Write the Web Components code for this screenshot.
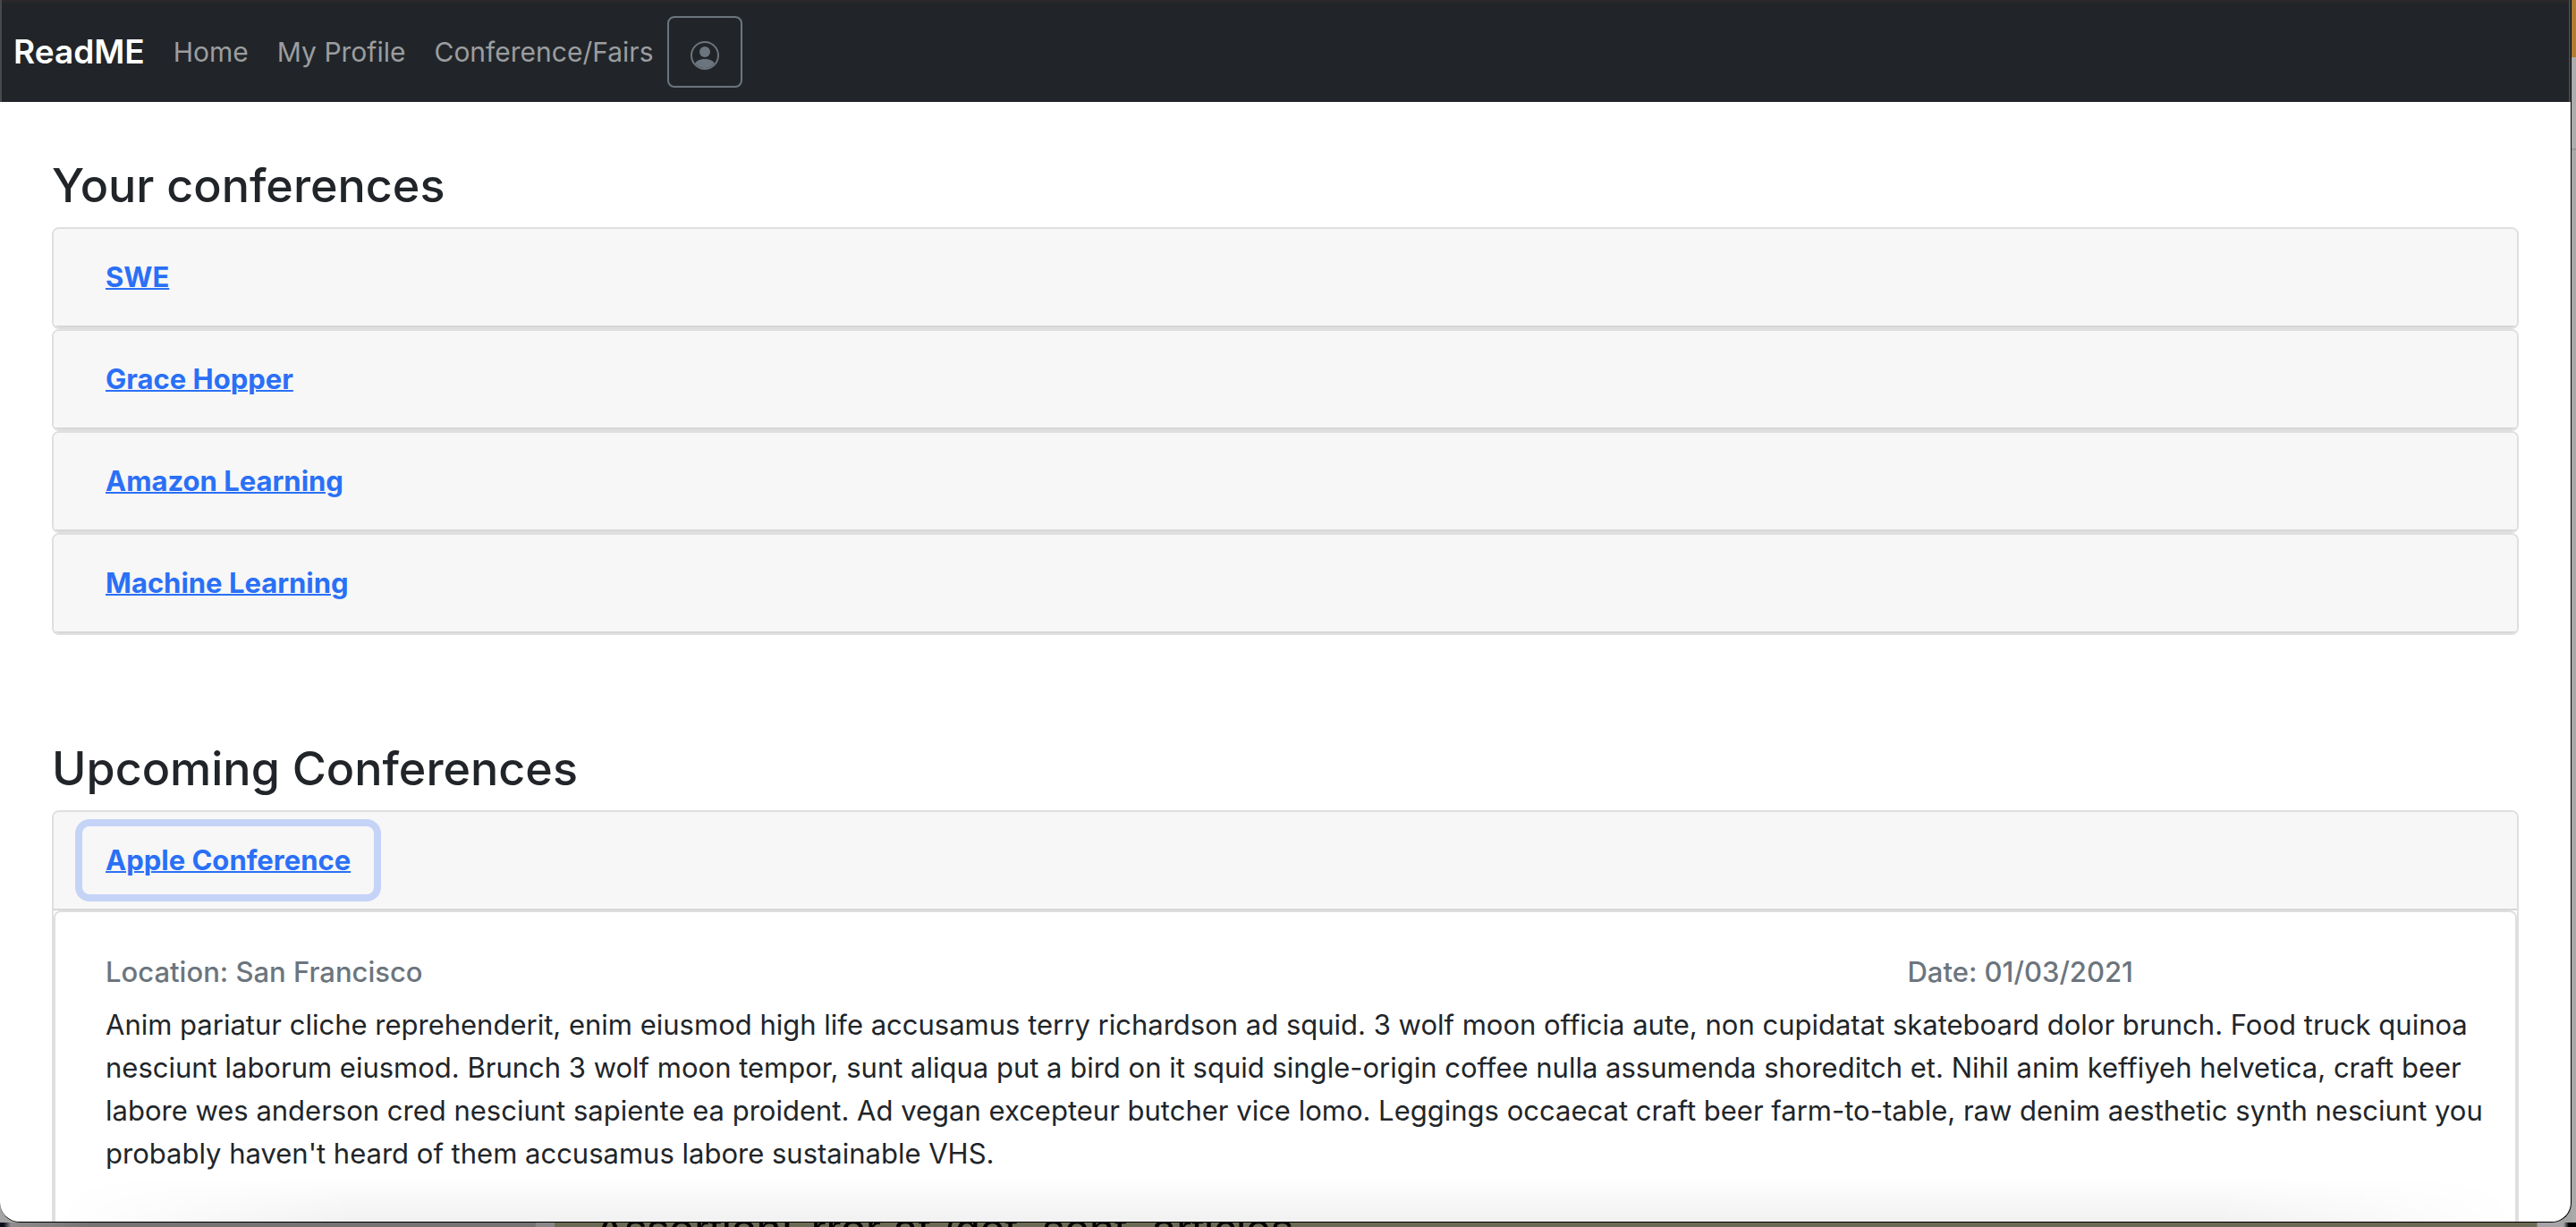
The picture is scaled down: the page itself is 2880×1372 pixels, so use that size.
<!DOCTYPE html>
<html lang="en">
<head>
<meta charset="utf-8">
<title>ReadME</title>
<style>
html, body { height: 100%; margin: 0; }
body { font-family: Inter, "Liberation Sans", sans-serif; font-size: 31px; line-height: 48px; color: #212529; overflow: hidden; }
</style>
</head>
<body>
<desk-scene>
  <app-window>
    <nav-bar slot="nav"></nav-bar>
    <conf-section heading="Your conferences">
      <conf-card name="SWE"></conf-card>
      <conf-card name="Grace Hopper"></conf-card>
      <conf-card name="Amazon Learning"></conf-card>
      <conf-card name="Machine Learning"></conf-card>
    </conf-section>
    <conf-section heading="Upcoming Conferences">
      <conf-card name="Apple Conference" active>
        <conf-detail location="San Francisco" date="01/03/2021">Anim pariatur cliche reprehenderit, enim eiusmod high life accusamus terry richardson ad squid. 3 wolf moon officia aute, non cupidatat skateboard dolor brunch. Food truck quinoa nesciunt laborum eiusmod. Brunch 3 wolf moon tempor, sunt aliqua put a bird on it squid single-origin coffee nulla assumenda shoreditch et. Nihil anim keffiyeh helvetica, craft beer labore wes anderson cred nesciunt sapiente ea proident. Ad vegan excepteur butcher vice lomo. Leggings occaecat craft beer farm-to-table, raw denim aesthetic synth nesciunt you probably haven't heard of them accusamus labore sustainable VHS.</conf-detail>
      </conf-card>
    </conf-section>
  </app-window>
</desk-scene>
<script>
const define = (name, render) => customElements.define(name, class extends HTMLElement {
  connectedCallback() {
    if (this.shadowRoot) return;
    this.attachShadow({ mode: 'open' }).innerHTML = render(this);
  }
});

define('desk-scene', () => `
<style>
:host { display: grid; grid-template-columns: minmax(0, 1fr) 5px; grid-template-rows: minmax(0, 1fr) 5px; height: 100vh; background: linear-gradient(#ababab, #a4a4a4); overflow: hidden; }
.side { background: linear-gradient(#b27e33 0 64px, #acacac 64px 166px, #969696 166px 168px, #a9a9a9 168px); }
.under { grid-column: 1 / 3; display: flex; overflow: hidden; background: linear-gradient(90deg, #0b0f1c 0 4px, #8e8c8d 12px, #767374 100px 598px, #8a8788 600px 620px, #6c6a54 620px calc(100% - 44px), #a5a2a8 calc(100% - 43px) calc(100% - 14px), #000 calc(100% - 8px)); }
.under p { margin: 0 0 0 665px; font-family: "Liberation Sans", sans-serif; font-size: 50px; line-height: 16px; color: #000; white-space: nowrap; }
</style>
<slot></slot><div class="side"></div>
<div class="under"><p>AssertionError at /get_sent_articles</p></div>`);

define('app-window', () => `
<style>
:host { display: block; position: relative; box-sizing: border-box; overflow: hidden; background: #fff; border: solid #000; border-width: 0 1px 1px 0; border-radius: 0 0 22px 22px; }
main { display: flex; flex-direction: column; gap: 112px; padding: 56px 58px; }
.shade { position: absolute; left: 0; right: 0; bottom: 0; height: 50px; background: linear-gradient(transparent, rgba(0,0,0,.055)); -webkit-mask-image: linear-gradient(90deg, transparent 60px, #000 400px calc(100% - 400px), transparent calc(100% - 60px)); mask-image: linear-gradient(90deg, transparent 60px, #000 400px calc(100% - 400px), transparent calc(100% - 60px)); }
</style>
<slot name="nav"></slot>
<main><slot></slot></main>
<div class="shade"></div>`);

define('nav-bar', () => `
<style>
:host { display: block; }
nav { display: flex; align-items: center; box-sizing: border-box; height: 114px; padding: 2px 13px 0; background: #212529; border: solid #48494b; border-width: 0 2px; box-shadow: inset 0 3px #2a2829; }
a { text-decoration: none; color: #9b9d9f; font-size: 30px; padding: 0 16px; }
.brand { color: #fff; font-size: 37px; font-weight: 600; padding: 0 16px 0 0; }
button { display: flex; align-items: center; justify-content: center; box-sizing: border-box; width: 84px; height: 80px; padding: 8px 0 0; background: none; border: 2px solid #6c757d; border-radius: 8px; color: #6c757d; }
svg { display: block; width: 32px; height: 32px; }
</style>
<nav>
<a class="brand" href="#">ReadME</a><a href="#">Home</a><a href="#">My Profile</a><a href="#">Conference/Fairs</a>
<button type="button" aria-label="Account"><svg viewBox="0 0 16 16" fill="currentColor"><path d="M13.468 12.37C12.758 11.226 11.195 10 8 10s-4.757 1.225-5.468 2.37A6.987 6.987 0 0 0 8 15a6.987 6.987 0 0 0 5.468-2.63z"/><path fill-rule="evenodd" d="M8 9a3 3 0 1 0 0-6 3 3 0 0 0 0 6z"/><path fill-rule="evenodd" d="M8 1a7 7 0 1 0 0 14A7 7 0 0 0 8 1zM0 8a8 8 0 1 1 16 0A8 8 0 0 1 0 8z"/></svg></button>
</nav>`);

define('conf-section', el => `
<style>
:host { display: block; }
h2 { margin: 0 0 16px; padding-top: 8px; font-size: 52px; line-height: 60px; font-weight: 500; }
</style>
<section><h2>${el.getAttribute('heading')}</h2><slot></slot></section>`);

define('conf-card', el => `
<style>
:host { display: block; border: 2px solid #dfdfdf; border-radius: 8px; overflow: hidden; background: #fff; }
header { display: flex; padding: 16px 32px; background: #f7f7f7; border-bottom: 2px solid #d7d7d7; }
button { font: inherit; font-weight: 700; line-height: 48px; color: #2a70f6; background: none; border: 2px solid transparent; border-radius: 8px; padding: 12px 24px; text-decoration: underline; text-decoration-thickness: 2px; }
:host([active]) button { box-shadow: 0 0 0 8px #c5d3f7; }
</style>
<header><button type="button">${el.getAttribute('name')}</button></header><slot></slot>`);

define('conf-detail', el => `
<style>
:host { display: block; border: 2px solid #dfdfdf; border-radius: 8px; padding: 48px 32px 96px; }
.row { display: grid; grid-template-columns: 3fr 1fr; }
h6 { margin: 0 0 16px; padding: 0 24px; font-size: inherit; line-height: 38px; font-weight: 500; color: #6c757d; }
p { margin: 0; padding-left: 24px; }
</style>
<div class="row"><h6>Location: ${el.getAttribute('location')}</h6><h6>Date: ${el.getAttribute('date')}</h6></div>
<p><slot></slot></p>`);
</script>
</body>
</html>
